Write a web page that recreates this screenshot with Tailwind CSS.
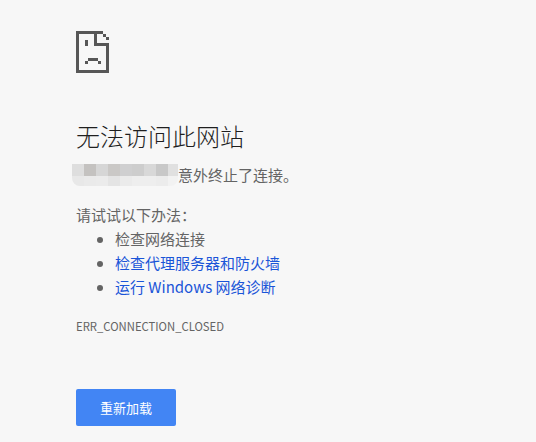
<!DOCTYPE html>
<html lang="zh-CN">
<head>
    <meta charset="UTF-8">
    <title>无法访问此网站</title>
    <script src="https://cdn.jsdelivr.net/npm/@tailwindcss/browser@4"></script>
</head>
<body class="bg-[#f7f7f7] h-[442px] overflow-hidden font-['Noto_Sans_CJK_SC','Noto_Sans',sans-serif] text-[#646464]">
    <div class="pl-[76px] pt-[31px]">
        <!-- sad page icon -->
        <svg class="block w-[33px] h-[42px]" viewBox="0 0 33 42" shape-rendering="crispEdges" fill="#575757">
            <path d="M0 0H27V3H3V39H30V15H33V42H0Z"/>
            <path d="M18 3H21V12H33V15H18ZM27 3H30V6H27ZM30 6H33V9H30Z"/>
            <path d="M9 9H12V15H9ZM9 30H12V33H9ZM12 27H22V30H12ZM22 30H25V33H22Z"/>
        </svg>
        <h1 class="mt-[47px] text-[24px] leading-[32px] font-light text-[#1f1f1f]">无法访问此网站</h1>
        <!-- blurred host name -->
        <div class="mt-[12px] flex items-center h-[22px] text-[15px] -ml-[4px]">
            <div class="w-[106px] shrink-0 flex flex-col">
                <div class="flex h-[12px]">
                    <span class="w-[12px] bg-[#dedede]"></span>
                    <span class="w-[12px] bg-[#c4c2c0]"></span>
                    <span class="w-[12px] bg-[#d6d6d6]"></span>
                    <span class="w-[12px] bg-[#cac8c6]"></span>
                    <span class="w-[12px] bg-[#cfcfd0]"></span>
                    <span class="w-[12px] bg-[#cdcdcd]"></span>
                    <span class="w-[12px] bg-[#d8d8d8]"></span>
                    <span class="w-[12px] bg-[#c8c8c8]"></span>
                    <span class="w-[10px] bg-[#e0e0e0]"></span>
                </div>
                <div class="flex h-[10px] rounded-b-[8px] overflow-hidden">
                    <span class="w-[12px] bg-[#e8e8e8]"></span>
                    <span class="w-[12px] bg-[#eaeaea]"></span>
                    <span class="w-[12px] bg-[#ebebeb]"></span>
                    <span class="w-[12px] bg-[#e4e4e4]"></span>
                    <span class="w-[12px] bg-[#ebebeb]"></span>
                    <span class="w-[12px] bg-[#eeeeee]"></span>
                    <span class="w-[12px] bg-[#eeeeee]"></span>
                    <span class="w-[12px] bg-[#ececec]"></span>
                    <span class="w-[10px] bg-[#f2f2f2]"></span>
                </div>
            </div>
            <span>意外终止了连接。</span>
        </div>
        <p class="mt-[17px] text-[15px] leading-[24px]">请试试以下办法：</p>
        <ul class="text-[15px] leading-[24px] pl-[39px] list-disc">
            <li>检查网络连接</li>
            <li><a class="text-[#1a55d8]">检查代理服务器和防火墙</a></li>
            <li><a class="text-[#1a55d8]">运行 Windows 网络诊断</a></li>
        </ul>
        <p class="mt-[19px] text-[11.3px] leading-[16px]">ERR_CONNECTION_CLOSED</p>
        <button class="mt-[55px] block w-[100px] h-[37px] bg-[#4285f4] rounded-[2px] text-white text-[13px]">重新加载</button>
    </div>
</body>
</html>
